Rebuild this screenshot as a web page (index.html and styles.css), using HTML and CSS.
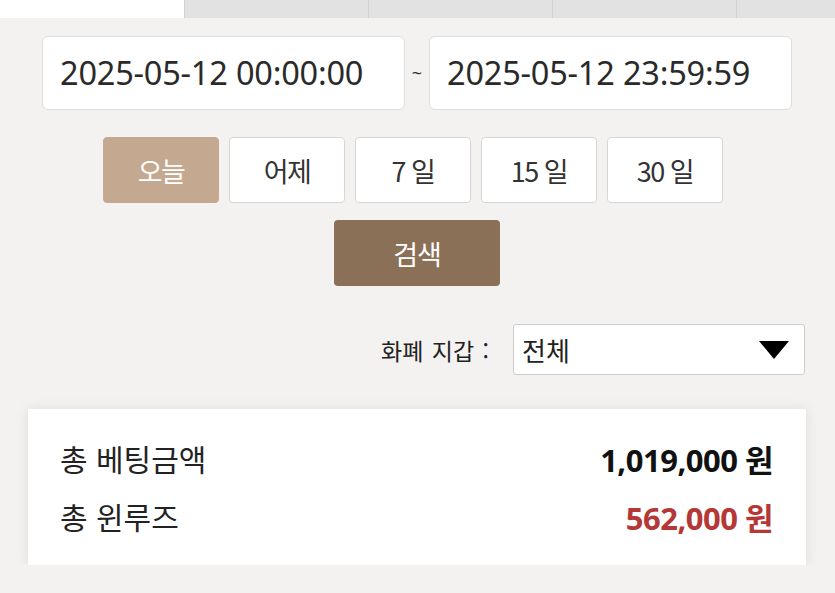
FILE: index.html
```html
<!DOCTYPE html>
<html lang="ko">
<head>
    <meta charset="UTF-8" />
    <title>베팅내역</title>
    <link rel="stylesheet" href="styles.css">
</head>
<body>
    <nav class="tabs">
        <div class="tab active"></div>
        <div class="tab"></div>
        <div class="tab"></div>
        <div class="tab"></div>
        <div class="tab"></div>
    </nav>

    <main class="content">
        <div class="date-row">
            <div class="date-input">2025-05-12 00:00:00</div>
            <span class="tilde">~</span>
            <div class="date-input">2025-05-12 23:59:59</div>
        </div>

        <div class="range-row">
            <button class="range-btn active">오늘</button>
            <button class="range-btn">어제</button>
            <button class="range-btn">7 일</button>
            <button class="range-btn">15 일</button>
            <button class="range-btn">30 일</button>
        </div>

        <div class="search-row">
            <button class="search-btn">검색</button>
        </div>

        <div class="filter-row">
            <label class="filter-label">화폐 지갑 :</label>
            <div class="select">
                <span>전체</span>
                <svg class="caret" width="30" height="18" viewBox="0 0 30 18"><polygon points="0,0 30,0 15,18" fill="#000"/></svg>
            </div>
        </div>

        <section class="summary">
            <div class="summary-row">
                <span>총 베팅금액</span>
                <strong>1,019,000 원</strong>
            </div>
            <div class="summary-row">
                <span>총 윈루즈</span>
                <strong class="red">562,000 원</strong>
            </div>
        </section>
    </main>
</body>
</html>
```

FILE: styles.css
```css
body {
    margin: 0;
    background: #f3f2f0;
    font-family: "Noto Sans", "Noto Sans CJK KR", sans-serif;
    color: #222;
    overflow: hidden;
}

.tabs {
    display: flex;
    height: 18px;
    overflow: hidden;
}

.tab {
    flex: 0 0 183px;
    background: #e2e2e2;
    border-left: 1px solid #d2d2d2;
}

.tab.active {
    flex-basis: 184px;
    background: #fff;
    border-left: none;
}

.content {
    padding: 18px 43px 0 42px;
}

.date-row {
    display: flex;
    align-items: center;
}

.date-input {
    width: 363px;
    height: 74px;
    box-sizing: border-box;
    background: #fff;
    border: 1px solid #ddd;
    border-radius: 6px;
    padding-left: 17px;
    font-size: 32.5px;
    line-height: 72px;
    letter-spacing: -0.2px;
    color: #2a2a2a;
}

.tilde {
    width: 24px;
    text-align: center;
    font-size: 18px;
    color: #333;
}

.range-row {
    display: flex;
    justify-content: center;
    gap: 10px;
    margin-top: 27px;
    padding-right: 8px;
}

.range-btn {
    width: 116px;
    height: 66px;
    background: #fff;
    border: 1px solid #d6d6d6;
    border-radius: 4px;
    font-family: "Noto Sans CJK KR", sans-serif;
    font-size: 27px;
    color: #333;
    letter-spacing: -1.5px;
}

.range-btn.active {
    background: #c4a88f;
    border-color: #c4a88f;
    color: #fff;
}

.search-row {
    display: flex;
    justify-content: center;
    margin-top: 17px;
}

.search-btn {
    width: 166px;
    height: 66px;
    background: #8a7057;
    border: none;
    border-radius: 4px;
    font-family: "Noto Sans CJK KR", sans-serif;
    font-size: 27px;
    color: #fff;
    letter-spacing: -1px;
}

.filter-row {
    display: flex;
    justify-content: flex-end;
    align-items: center;
    gap: 24px;
    margin-top: 38px;
    margin-right: -13px;
}

.filter-label {
    font-family: "Noto Sans CJK KR", sans-serif;
    font-size: 23px;
    word-spacing: 2px;
    color: #222;
}

.select {
    width: 292px;
    height: 51px;
    box-sizing: border-box;
    display: flex;
    align-items: center;
    justify-content: space-between;
    background: #fff;
    border: 1px solid #ccc;
    border-radius: 3px;
    padding: 0 15px 0 8px;
    font-family: "Noto Sans CJK KR", sans-serif;
    font-size: 26px;
}

.summary {
    margin: 34px -14px 0 -14px;
    background: #fff;
    box-shadow: 0 0 12px rgba(0, 0, 0, 0.09);
    padding: 20px 33px 20px 32px;
}

.summary-row {
    display: flex;
    justify-content: space-between;
    align-items: center;
    height: 58px;
    font-family: "Noto Sans CJK KR", sans-serif;
    font-size: 30px;
}

.summary-row strong {
    font-family: "Noto Sans", "Noto Sans CJK KR", sans-serif;
    font-size: 31px;
    letter-spacing: -0.5px;
    color: #111;
}

.summary-row strong.red {
    color: #b33836;
}
```
